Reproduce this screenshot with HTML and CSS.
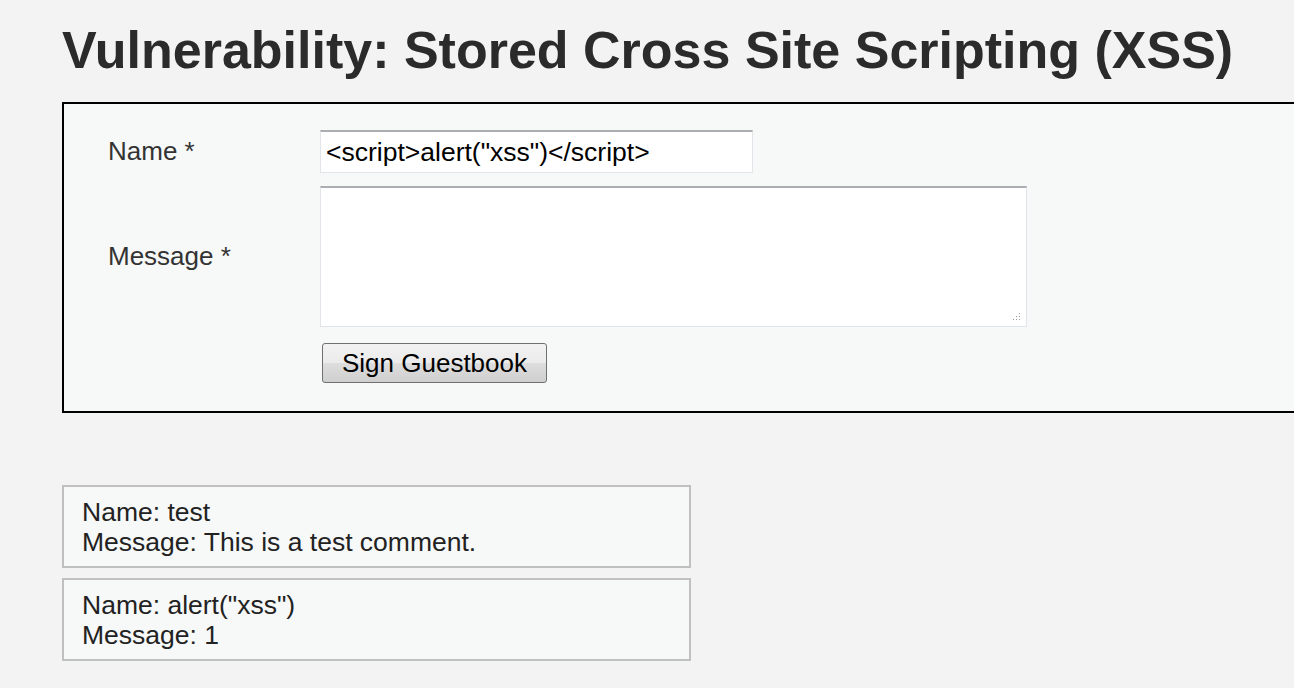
FILE: index.html
```html
<!DOCTYPE html>
<html>
<head>
<meta charset="utf-8">
<link rel="stylesheet" href="styles.css">
</head>
<body>
<div class="page">
  <h1 class="title">Vulnerability: Stored Cross Site Scripting (XSS)</h1>
  <div class="vuln-box">
    <form class="gb-form">
      <div class="row row-name">
        <label class="lbl">Name *</label>
        <input class="txt" type="text" value='&lt;script&gt;alert("xss")&lt;/script&gt;'>
      </div>
      <div class="row row-msg">
        <label class="lbl">Message *</label>
        <div class="ta">
          <svg class="grip" width="10" height="10" viewBox="0 0 10 10">
            <rect x="8" y="1" width="1" height="1" fill="#9a9a9a"/>
            <rect x="5" y="4" width="1" height="1" fill="#9a9a9a"/>
            <rect x="8" y="4" width="1" height="1" fill="#9a9a9a"/>
            <rect x="2" y="7" width="1" height="1" fill="#9a9a9a"/>
            <rect x="5" y="7" width="1" height="1" fill="#9a9a9a"/>
            <rect x="8" y="7" width="1" height="1" fill="#9a9a9a"/>
          </svg>
        </div>
      </div>
      <div class="row row-btn">
        <span class="lbl"></span>
        <button class="btn" type="button">Sign Guestbook</button>
      </div>
    </form>
  </div>
  <div class="comments">
    <div class="comment">Name: test<br>Message: This is a test comment.</div>
    <div class="comment">Name: alert("xss")<br>Message: 1</div>
  </div>
</div>
</body>
</html>
```
FILE: styles.css
```css
html, body {
  margin: 0;
  padding: 0;
  background: #f3f3f3;
  overflow: hidden;
}
body {
  width: 1294px;
  height: 688px;
  font-family: "Liberation Sans", Arial, sans-serif;
  color: #222;
}
.page {
  padding-left: 62px;
}
.title {
  margin: 0;
  padding-top: 20px;
  font-size: 52px;
  font-weight: bold;
  line-height: 60px;
  color: #2b2b2b;
  white-space: nowrap;
}
.vuln-box {
  margin-top: 22px;
  width: 1300px;
  height: 311px;
  border: 2px solid #000;
  background: #f7f8f8;
  box-sizing: border-box;
}
.gb-form {
  padding: 26px 0 0 44px;
}
.row {
  display: flex;
  align-items: center;
}
.lbl {
  width: 212px;
  font-size: 26px;
  color: #333;
}
.txt {
  width: 433px;
  height: 43px;
  box-sizing: border-box;
  border: 1px solid #e1e5ea;
  border-top: 2px solid #abadb3;
  background: #fff;
  font-family: "Liberation Sans", Arial, sans-serif;
  font-size: 26.5px;
  color: #000;
  padding: 0 5px;
  margin: 0;
  outline: none;
}
.row-msg {
  margin-top: 13px;
}
.ta {
  position: relative;
  width: 707px;
  height: 141px;
  box-sizing: border-box;
  border: 1px solid #e1e5ea;
  border-top: 2px solid #abadb3;
  background: #fff;
}
.grip {
  position: absolute;
  right: 5px;
  bottom: 4px;
}
.row-btn {
  margin-top: 16px;
}
.btn {
  margin-left: 2px;
  width: 225px;
  height: 40px;
  box-sizing: border-box;
  border: 1px solid #707070;
  border-radius: 3px;
  background: linear-gradient(#f2f2f2 0%, #ebebeb 50%, #dddddd 51%, #cfcfcf 100%);
  font-family: "Liberation Sans", Arial, sans-serif;
  font-size: 26px;
  color: #000;
  padding: 0;
}
.comments {
  margin-top: 72px;
  display: flex;
  flex-direction: column;
  gap: 10px;
}
.comment {
  width: 629px;
  height: 83px;
  box-sizing: border-box;
  border: 2px solid #c0c0c0;
  background: #f7f8f8;
  padding: 10px 18px;
  font-size: 26.5px;
  line-height: 30px;
  color: #222;
}
```
